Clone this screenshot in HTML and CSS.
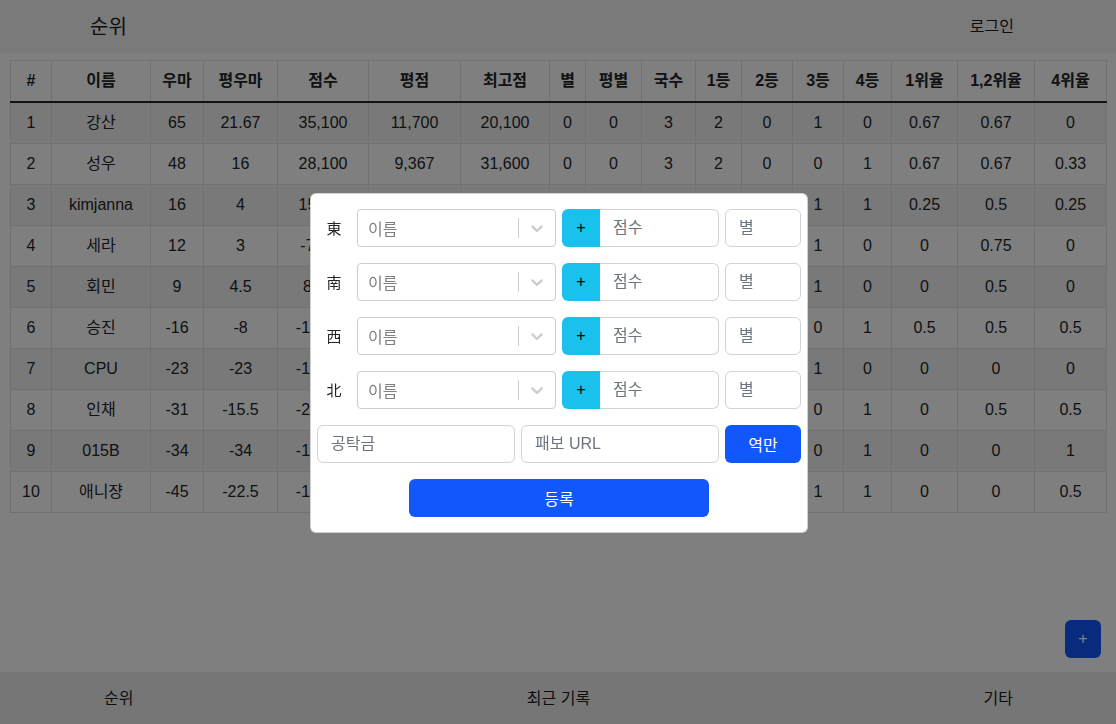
FILE: index.html
```html
<!DOCTYPE html>
<html lang="ko">
<head>
<meta charset="utf-8">
<title>순위</title>
<link rel="stylesheet" href="styles.css">
</head>
<body>
<div class="app">
  <header class="topbar">
    <span class="brand">순위</span>
    <span class="login">로그인</span>
  </header>
  <main class="content">
    <table class="rank">
      <colgroup>
        <col class="w41"><col class="w99"><col class="w53"><col class="w74"><col class="w91"><col class="w92"><col class="w89"><col class="w36"><col class="w56"><col class="w54"><col class="w46"><col class="w51"><col class="w51"><col class="w48"><col class="w66"><col class="w77"><col class="w72">
      </colgroup>
      <thead>
        <tr><th>#</th><th>이름</th><th>우마</th><th>평우마</th><th>점수</th><th>평점</th><th>최고점</th><th>별</th><th>평별</th><th>국수</th><th>1등</th><th>2등</th><th>3등</th><th>4등</th><th>1위율</th><th>1,2위율</th><th>4위율</th></tr>
      </thead>
      <tbody>
        <tr><td>1</td><td>강산</td><td>65</td><td>21.67</td><td>35,100</td><td>11,700</td><td>20,100</td><td>0</td><td>0</td><td>3</td><td>2</td><td>0</td><td>1</td><td>0</td><td>0.67</td><td>0.67</td><td>0</td></tr>
        <tr><td>2</td><td>성우</td><td>48</td><td>16</td><td>28,100</td><td>9,367</td><td>31,600</td><td>0</td><td>0</td><td>3</td><td>2</td><td>0</td><td>0</td><td>1</td><td>0.67</td><td>0.67</td><td>0.33</td></tr>
        <tr><td>3</td><td>kimjanna</td><td>16</td><td>4</td><td>15,800</td><td>3,950</td><td>24,300</td><td>0</td><td>0</td><td>4</td><td>1</td><td>1</td><td>1</td><td>1</td><td>0.25</td><td>0.5</td><td>0.25</td></tr>
        <tr><td>4</td><td>세라</td><td>12</td><td>3</td><td>-7,600</td><td>-1,900</td><td>18,200</td><td>0</td><td>0</td><td>4</td><td>0</td><td>3</td><td>1</td><td>0</td><td>0</td><td>0.75</td><td>0</td></tr>
        <tr><td>5</td><td>회민</td><td>9</td><td>4.5</td><td>8,300</td><td>4,150</td><td>17,500</td><td>0</td><td>0</td><td>2</td><td>0</td><td>1</td><td>1</td><td>0</td><td>0</td><td>0.5</td><td>0</td></tr>
        <tr><td>6</td><td>승진</td><td>-16</td><td>-8</td><td>-14,200</td><td>-7,100</td><td>32,400</td><td>0</td><td>0</td><td>2</td><td>1</td><td>0</td><td>0</td><td>1</td><td>0.5</td><td>0.5</td><td>0.5</td></tr>
        <tr><td>7</td><td>CPU</td><td>-23</td><td>-23</td><td>-12,400</td><td>-12,400</td><td>12,600</td><td>0</td><td>0</td><td>1</td><td>0</td><td>0</td><td>1</td><td>0</td><td>0</td><td>0</td><td>0</td></tr>
        <tr><td>8</td><td>인채</td><td>-31</td><td>-15.5</td><td>-20,600</td><td>-10,300</td><td>27,800</td><td>0</td><td>0</td><td>2</td><td>0</td><td>1</td><td>0</td><td>1</td><td>0</td><td>0.5</td><td>0.5</td></tr>
        <tr><td>9</td><td>015B</td><td>-34</td><td>-34</td><td>-14,000</td><td>-14,000</td><td>-14,000</td><td>0</td><td>0</td><td>1</td><td>0</td><td>0</td><td>0</td><td>1</td><td>0</td><td>0</td><td>1</td></tr>
        <tr><td>10</td><td>애니쟝</td><td>-45</td><td>-22.5</td><td>-15,100</td><td>-7,550</td><td>9,800</td><td>0</td><td>0</td><td>2</td><td>0</td><td>0</td><td>1</td><td>1</td><td>0</td><td>0</td><td>0.5</td></tr>
      </tbody>
    </table>
  </main>
  <nav class="bottombar">
    <span>순위</span>
    <span>최근 기록</span>
    <span>기타</span>
  </nav>
  <button class="fab" type="button">+</button>
</div>

<div class="backdrop"></div>

<div class="modal-wrap">
  <div class="modal">
    <div class="row">
      <span class="wind">東</span>
      <div class="select"><span class="ph">이름</span><span class="sep"></span><span class="ind"><svg viewBox="0 0 20 20" width="20" height="20"><path d="M4.516 7.548c0.436-0.446 1.043-0.481 1.576 0l3.908 3.747 3.908-3.747c0.533-0.481 1.141-0.446 1.574 0 0.436 0.445 0.408 1.197 0 1.615-0.406 0.418-4.695 4.502-4.695 4.502-0.217 0.223-0.502 0.335-0.787 0.335s-0.57-0.112-0.789-0.335c0 0-4.287-4.084-4.695-4.502s-0.436-1.17 0-1.615z"/></svg></span></div>
      <div class="group"><button class="btn-info" type="button">+</button><input class="field grp" placeholder="점수"></div>
      <input class="field star" placeholder="별">
    </div>
    <div class="row">
      <span class="wind">南</span>
      <div class="select"><span class="ph">이름</span><span class="sep"></span><span class="ind"><svg viewBox="0 0 20 20" width="20" height="20"><path d="M4.516 7.548c0.436-0.446 1.043-0.481 1.576 0l3.908 3.747 3.908-3.747c0.533-0.481 1.141-0.446 1.574 0 0.436 0.445 0.408 1.197 0 1.615-0.406 0.418-4.695 4.502-4.695 4.502-0.217 0.223-0.502 0.335-0.787 0.335s-0.57-0.112-0.789-0.335c0 0-4.287-4.084-4.695-4.502s-0.436-1.17 0-1.615z"/></svg></span></div>
      <div class="group"><button class="btn-info" type="button">+</button><input class="field grp" placeholder="점수"></div>
      <input class="field star" placeholder="별">
    </div>
    <div class="row">
      <span class="wind">西</span>
      <div class="select"><span class="ph">이름</span><span class="sep"></span><span class="ind"><svg viewBox="0 0 20 20" width="20" height="20"><path d="M4.516 7.548c0.436-0.446 1.043-0.481 1.576 0l3.908 3.747 3.908-3.747c0.533-0.481 1.141-0.446 1.574 0 0.436 0.445 0.408 1.197 0 1.615-0.406 0.418-4.695 4.502-4.695 4.502-0.217 0.223-0.502 0.335-0.787 0.335s-0.57-0.112-0.789-0.335c0 0-4.287-4.084-4.695-4.502s-0.436-1.17 0-1.615z"/></svg></span></div>
      <div class="group"><button class="btn-info" type="button">+</button><input class="field grp" placeholder="점수"></div>
      <input class="field star" placeholder="별">
    </div>
    <div class="row">
      <span class="wind">北</span>
      <div class="select"><span class="ph">이름</span><span class="sep"></span><span class="ind"><svg viewBox="0 0 20 20" width="20" height="20"><path d="M4.516 7.548c0.436-0.446 1.043-0.481 1.576 0l3.908 3.747 3.908-3.747c0.533-0.481 1.141-0.446 1.574 0 0.436 0.445 0.408 1.197 0 1.615-0.406 0.418-4.695 4.502-4.695 4.502-0.217 0.223-0.502 0.335-0.787 0.335s-0.57-0.112-0.789-0.335c0 0-4.287-4.084-4.695-4.502s-0.436-1.17 0-1.615z"/></svg></span></div>
      <div class="group"><button class="btn-info" type="button">+</button><input class="field grp" placeholder="점수"></div>
      <input class="field star" placeholder="별">
    </div>
    <div class="row">
      <input class="field flex1" placeholder="공탁금">
      <input class="field flex1" placeholder="패보 URL">
      <button class="btn-primary star" type="button">역만</button>
    </div>
    <div class="row center">
      <button class="btn-primary submit" type="button">등록</button>
    </div>
  </div>
</div>
</body>
</html>
```

FILE: styles.css
```css
* { box-sizing: border-box; }

html, body {
  margin: 0;
  padding: 0;
}

body {
  font-family: "Liberation Sans", "Noto Sans CJK KR", sans-serif;
  font-size: 16px;
  line-height: 24px;
  color: #212529;
  background: #ffffff;
}

.app {
  display: flex;
  flex-direction: column;
  height: 724px;
}

.topbar {
  height: 53px;
  flex: none;
  background: #f4f4f4;
  display: flex;
  align-items: center;
  justify-content: space-between;
  padding: 0 103px 0 90px;
}

.brand {
  font-size: 20px;
  color: #1c1c1c;
}

.login {
  font-size: 16px;
  color: #1c1c1c;
  margin-right: -1px;
}

.content {
  flex: 1;
  padding: 7px 10px 0;
}

.rank {
  width: 1096px;
  table-layout: fixed;
  border-collapse: collapse;
  text-align: center;
}

.rank th,
.rank td {
  border: 1px solid #dee2e6;
  padding: 8px 0;
  height: 41px;
  white-space: nowrap;
  overflow: hidden;
}

.rank th {
  font-weight: bold;
}

.rank thead th {
  border-bottom: 2px solid #212529;
}

.rank tbody tr:nth-child(odd) td {
  background: #f2f2f2;
}

.w41 { width: 41px; }
.w99 { width: 99px; }
.w53 { width: 53px; }
.w74 { width: 74px; }
.w91 { width: 91px; }
.w92 { width: 92px; }
.w89 { width: 89px; }
.w36 { width: 36px; }
.w56 { width: 56px; }
.w54 { width: 54px; }
.w46 { width: 46px; }
.w51 { width: 51px; }
.w48 { width: 48px; }
.w66 { width: 66px; }
.w77 { width: 77px; }
.w72 { width: 72px; }

.bottombar {
  height: 52px;
  flex: none;
  background: #ececec;
  display: flex;
  align-items: center;
  justify-content: space-between;
  padding: 2px 103px 0 104px;
  color: #1c1c1c;
}

.fab {
  position: fixed;
  right: 15px;
  bottom: 66px;
  width: 36px;
  height: 38px;
  border: none;
  border-radius: 6px;
  background: #1157fb;
  color: #ffffff;
  font-size: 16px;
  font-family: "Liberation Sans", sans-serif;
  padding: 0;
}

.backdrop {
  position: fixed;
  inset: 0;
  background: rgba(0, 0, 0, 0.5);
}

.modal-wrap {
  position: fixed;
  inset: 0;
  display: flex;
  align-items: center;
  justify-content: center;
  padding-left: 2px;
  padding-top: 2px;
}

.modal {
  width: 498px;
  background: #ffffff;
  border: 1px solid rgba(0, 0, 0, 0.18);
  border-radius: 6px;
  padding: 15px 6px;
  display: flex;
  flex-direction: column;
  gap: 16px;
}

.row {
  display: flex;
  gap: 6px;
  height: 38px;
  align-items: stretch;
}

.row.center {
  justify-content: center;
}

.wind {
  width: 34px;
  flex: none;
  display: flex;
  align-items: center;
  justify-content: center;
  font-family: "Noto Sans CJK KR", sans-serif;
  font-size: 15px;
  color: #212529;
}

.select {
  width: 199px;
  flex: none;
  border: 1px solid #cccccc;
  border-radius: 4px;
  display: flex;
  align-items: center;
  padding-left: 10px;
}

.ph {
  flex: 1;
  color: #808080;
  font-family: "Noto Sans CJK KR", sans-serif;
}

.sep {
  width: 1px;
  align-self: stretch;
  margin: 8px 0;
  background: #cccccc;
}

.ind {
  width: 36px;
  display: flex;
  align-items: center;
  justify-content: center;
}

.ind svg {
  fill: #cccccc;
}

.group {
  width: 157px;
  flex: none;
  display: flex;
}

.btn-info {
  width: 38px;
  flex: none;
  border: none;
  background: #1bc1ed;
  color: #000000;
  border-radius: 6px 0 0 6px;
  font-size: 16px;
  font-family: "Liberation Sans", sans-serif;
  padding: 0;
}

.field {
  border: 1px solid #ced4da;
  border-radius: 6px;
  padding: 6px 12px 6px 13px;
  font-family: "Liberation Sans", "Noto Sans CJK KR", sans-serif;
  font-size: 16px;
  color: #212529;
  min-width: 0;
  background: #ffffff;
}

.field::placeholder {
  color: #6c757d;
}

.field.grp {
  flex: 1;
  border-radius: 0 6px 6px 0;
  border-left: none;
}

.star {
  width: 76px;
  flex: none;
}

.flex1 {
  flex: 1;
}

.btn-primary {
  border: none;
  border-radius: 6px;
  background: #1157fb;
  color: #ffffff;
  font-family: "Noto Sans CJK KR", sans-serif;
  font-size: 16px;
  padding: 0;
}

.submit {
  width: 300px;
}
```
